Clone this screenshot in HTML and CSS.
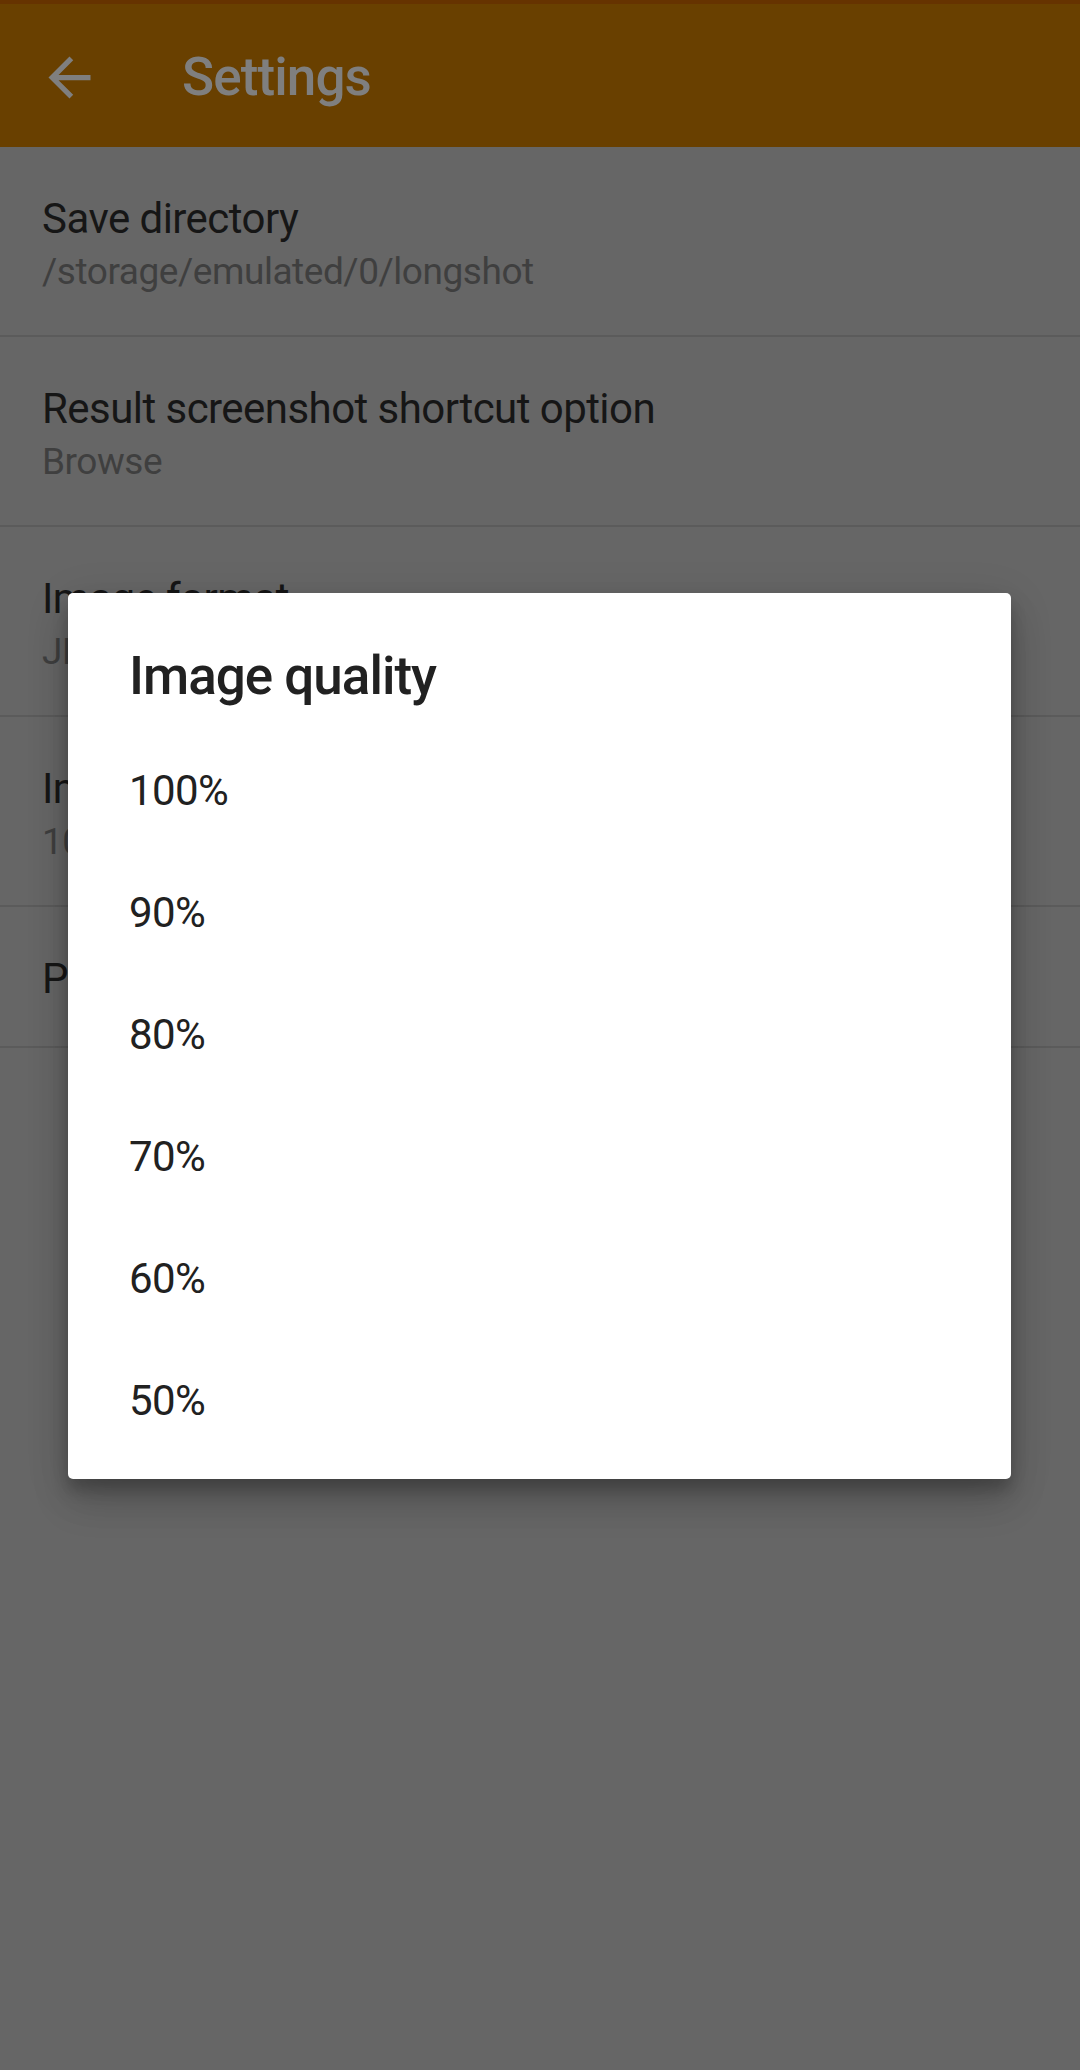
FILE: index.html
```html
<!DOCTYPE html>
<html lang="en">
<head>
    <meta charset="UTF-8">
    <title>Settings</title>
    <link rel="stylesheet" href="styles.css">
</head>
<body>
<div class="screen">
    <div class="status-strip"></div>
    <header class="toolbar">
        <svg class="back-icon" viewBox="0 0 24 24" width="63" height="63">
            <path d="M20 11H7.83l5.59-5.59L12 4l-8 8 8 8 1.41-1.41L7.83 13H20v-2z" fill="#7f7f7f"/>
        </svg>
        <h1 class="toolbar-title">Settings</h1>
    </header>

    <ul class="pref-list">
        <li class="pref">
            <div class="pref-title">Save directory</div>
            <div class="pref-summary">/storage/emulated/0/longshot</div>
        </li>
        <li class="pref">
            <div class="pref-title">Result screenshot shortcut option</div>
            <div class="pref-summary">Browse</div>
        </li>
        <li class="pref">
            <div class="pref-title">Image format</div>
            <div class="pref-summary">JPEG</div>
        </li>
        <li class="pref">
            <div class="pref-title">Image quality</div>
            <div class="pref-summary">100%</div>
        </li>
        <li class="pref">
            <div class="pref-title">Privacy policy</div>
        </li>
    </ul>

    <div class="dialog">
        <h2 class="dialog-title">Image quality</h2>
        <ul class="choice-list">
            <li class="choice">100%</li>
            <li class="choice">90%</li>
            <li class="choice">80%</li>
            <li class="choice">70%</li>
            <li class="choice">60%</li>
            <li class="choice">50%</li>
        </ul>
    </div>
</div>
</body>
</html>
```

FILE: styles.css
```css
html, body {
    margin: 0;
    padding: 0;
}
body {
    font-family: Roboto, "Noto Sans", sans-serif;
    background: #666666;
}
.screen {
    position: relative;
    width: 1080px;
    height: 2070px;
    overflow: hidden;
    background: #666666;
}
.status-strip {
    height: 4px;
    background: #663300;
}
.toolbar {
    height: 143px;
    background: #694000;
    display: flex;
    align-items: center;
}
.back-icon {
    margin-left: 38px;
    margin-top: 4px;
    flex: none;
}
.toolbar-title {
    margin: 0 0 0 81px;
    font-size: 53px;
    font-weight: 500;
    letter-spacing: -0.9px;
    color: #7f7f7f;
    line-height: 64px;
    padding-top: 2px;
}
.pref-list {
    list-style: none;
    margin: 0;
    padding: 0;
}
.pref {
    padding: 44px 42px 39px;
    border-bottom: 2px solid #5b5b5b;
}
.pref-title {
    font-size: 42px;
    line-height: 56px;
    letter-spacing: -0.55px;
    color: #161616;
    white-space: nowrap;
}
.pref-summary {
    font-size: 37px;
    line-height: 49px;
    letter-spacing: -0.45px;
    color: #3f3f3f;
    white-space: nowrap;
}
.dialog {
    position: absolute;
    left: 68px;
    top: 593px;
    width: 943px;
    height: 886px;
    box-sizing: border-box;
    padding: 51px 61px 17px;
    background: #ffffff;
    border-radius: 5px;
    box-shadow: 0 24px 38px rgba(0, 0, 0, 0.14), 0 9px 46px rgba(0, 0, 0, 0.12), 0 11px 15px rgba(0, 0, 0, 0.2);
}
.dialog-title {
    margin: 0;
    font-size: 53px;
    font-weight: 500;
    line-height: 64px;
    letter-spacing: -1px;
    color: #212121;
}
.choice-list {
    list-style: none;
    margin: 22px 0 0;
    padding: 0;
}
.choice {
    height: 122px;
    line-height: 122px;
    font-size: 42px;
    letter-spacing: -0.6px;
    color: #212121;
}
```
